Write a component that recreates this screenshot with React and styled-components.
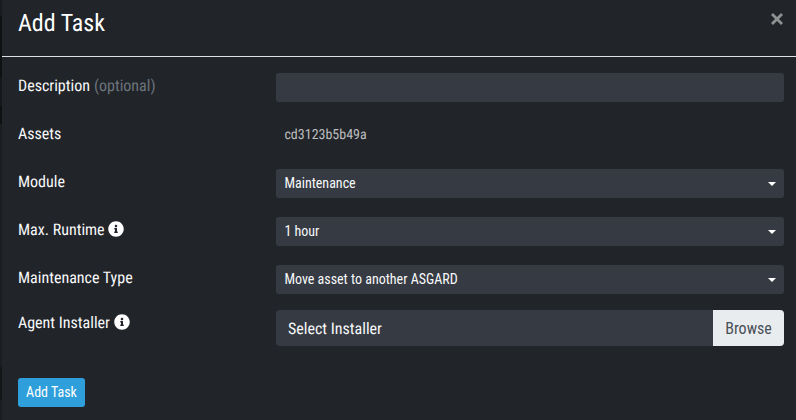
import React from "react";
import styled, { createGlobalStyle } from "styled-components";
import { FaInfoCircle } from "react-icons/fa";

const GlobalStyle = createGlobalStyle`
  * { box-sizing: border-box; }
  body {
    margin: 0;
    background: #212429;
    color: #fff;
    font-family: "Roboto Condensed", Roboto, sans-serif;
    font-stretch: 75%;
    font-weight: 400;
    font-size: 16px;
    line-height: 24px;
    text-rendering: geometricPrecision;
  }
  button { font: inherit; font-stretch: inherit; border: 0; margin: 0; }
`;

const Page = styled.div`
  display: flex;
  height: 420px;
  overflow: hidden;
`;

const Backdrop = styled.div`
  flex: 0 0 2px;
  background: linear-gradient(
    #191c1f 0 16px, #0f1012 16px 77px, #15181a 77px 106px, #0f1012 106px 124px,
    #1b1e21 124px 367px, #131517 367px 400px, #1b1e21 400px
  );
`;

const Modal = styled.section`
  flex: 1;
  background: #212429;
`;

const Header = styled.header`
  display: flex;
  justify-content: space-between;
  align-items: flex-start;
  height: 57px;
  padding: 5px 12px 0 16px;
  border-bottom: 1px solid #dee2e6;
`;

const Title = styled.h4`
  margin: 0;
  font-size: 24px;
  font-weight: 400;
  line-height: 36px;
`;

const CloseButton = styled.button`
  display: flex;
  padding: 0;
  margin-top: 7px;
  background: none;
  color: #909294;
`;

const Form = styled.form`
  display: flex;
  flex-direction: column;
  align-items: flex-start;
  padding: 16px 12px 0 16px;
`;

const Row = styled.div`
  display: grid;
  grid-template-columns: 258px 1fr;
  align-items: start;
  width: 100%;
  height: ${(p) => p.$height || 48}px;
`;

const Label = styled.label`
  display: flex;
  align-items: center;
  gap: ${(p) => p.$gap || 3.5}px;
  height: 25px;
  padding-top: 1px;
  color: #f8f9fa;
`;

const Muted = styled.span`
  color: #6c757d;
`;

const InfoIcon = styled(FaInfoCircle)`
  width: 16px;
  height: 16px;
  margin-bottom: 2px;
  color: #fff;
`;

const Input = styled.input`
  width: 100%;
  height: 29px;
  padding: 0 8px;
  border: 0;
  border-radius: 3px;
  background: #363a42;
  color: #fff;
  font: inherit;
`;

const PlainValue = styled.div`
  padding: 0 8.4px;
  font-size: 14px;
  line-height: 29px;
  color: #bcbdbf;
`;

const Select = styled.button`
  display: flex;
  align-items: center;
  justify-content: space-between;
  width: 100%;
  height: 29px;
  padding: 0 8px 0 8.4px;
  border-radius: 3px;
  background: #363a42;
  color: #f8f9fa;
  font-size: 14px;
  line-height: 29px;
`;

const Caret = styled.span`
  border: 4px solid transparent;
  border-top-color: #fff;
  border-bottom: 0;
  margin-top: 1px;
`;

const FilePicker = styled.div`
  display: flex;
  height: 36px;
  border-radius: 4px;
  overflow: hidden;
  background: #363a42;
  line-height: 38px;
`;

const FileName = styled.span`
  flex: 1;
  padding-left: 12px;
  color: #f8f9fa;
`;

const Browse = styled.button`
  width: 71px;
  padding: 2px 0 0;
  background: #e9ecef;
  color: #495057;
  line-height: 34px;
`;

const Submit = styled.button`
  width: 67px;
  height: 29px;
  padding: 0;
  border-radius: 3px;
  background: #2e9fdb;
  color: #fff;
  font-size: 14px;
  line-height: 29px;
`;

const selects = [
  { label: "Module", value: "Maintenance" },
  { label: "Max. Runtime", value: "1 hour", info: true },
  { label: "Maintenance Type", value: "Move asset to another ASGARD", height: 45 },
];

export default function App() {
  return (
    <Page>
      <GlobalStyle />
      <Backdrop />
      <Modal>
        <Header>
          <Title>Add Task</Title>
          <CloseButton aria-label="Close">
            <svg width="14" height="14" viewBox="0 0 14 14" fill="none" stroke="currentColor" strokeWidth="2.8">
              <path d="M2 2l10 10M12 2L2 12" />
            </svg>
          </CloseButton>
        </Header>
        <Form>
          <Row>
            <Label $gap={4}>Description <Muted>(optional)</Muted></Label>
            <Input />
          </Row>
          <Row>
            <Label>Assets</Label>
            <PlainValue>cd3123b5b49a</PlainValue>
          </Row>
          {selects.map((s) => (
            <Row key={s.label} $height={s.height}>
              <Label>{s.label}{s.info && <InfoIcon />}</Label>
              <Select type="button">{s.value}<Caret /></Select>
            </Row>
          ))}
          <Row $height={68}>
            <Label $gap={4}>Agent Installer<InfoIcon /></Label>
            <FilePicker>
              <FileName>Select Installer</FileName>
              <Browse type="button">Browse</Browse>
            </FilePicker>
          </Row>
          <Submit type="button">Add Task</Submit>
        </Form>
      </Modal>
    </Page>
  );
}
